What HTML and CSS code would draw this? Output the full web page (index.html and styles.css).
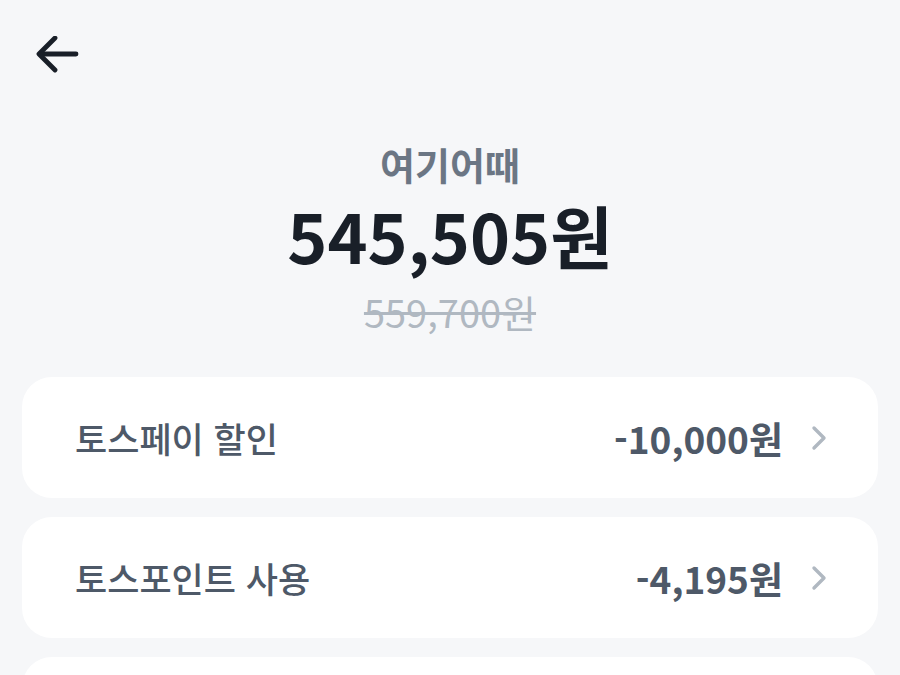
FILE: index.html
```html
<!DOCTYPE html>
<html lang="ko">
  <head>
    <meta charset="UTF-8" />
    <meta name="viewport" content="width=device-width, initial-scale=1.0" />
    <title>결제 금액</title>
    <link rel="stylesheet" href="styles.css">
  </head>
  <body>
    <!-- Top bar with back button -->
    <header class="top-bar">
      <button class="back-btn" type="button" aria-label="뒤로가기">
        <svg width="44" height="40" viewBox="0 0 44 40" fill="none" stroke="#191f28" stroke-width="4.8" stroke-linecap="round" stroke-linejoin="round">
          <path d="M40 18H4" />
          <path d="M19 2L3 18L19 34" />
        </svg>
      </button>
    </header>

    <!-- Payment summary -->
    <section class="summary">
      <p class="merchant">여기어때</p>
      <p class="price">545,505원</p>
      <p class="original">559,700원</p>
    </section>

    <!-- Discount rows -->
    <div class="discount-list">
      <div class="discount-item">
        <span class="discount-label">토스페이 할인</span>
        <span class="discount-value">
          -10,000원
          <svg class="chevron" width="16" height="26" viewBox="0 0 16 26" fill="none" stroke="#b0b8c1" stroke-width="3.4" stroke-linecap="round" stroke-linejoin="round">
            <path d="M3 3L13 13L3 23" />
          </svg>
        </span>
      </div>
      <div class="discount-item">
        <span class="discount-label">토스포인트 사용</span>
        <span class="discount-value">
          -4,195원
          <svg class="chevron" width="16" height="26" viewBox="0 0 16 26" fill="none" stroke="#b0b8c1" stroke-width="3.4" stroke-linecap="round" stroke-linejoin="round">
            <path d="M3 3L13 13L3 23" />
          </svg>
        </span>
      </div>
      <div class="discount-item"></div>
    </div>
  </body>
</html>
```

FILE: styles.css
```css
body {
  margin: 0;
  font-family: "Noto Sans CJK KR", "Noto Sans", sans-serif;
  background-color: #f6f7f9;
  color: #191f28;
  overflow: hidden;
}
.top-bar {
  height: 144px;
  padding: 36px 0 0 36px;
  box-sizing: border-box;
}
.back-btn {
  padding: 0;
  border: none;
  background: none;
  cursor: pointer;
  display: block;
}
.summary {
  text-align: center;
}
.summary p {
  margin: 0;
}
.merchant {
  font-size: 38px;
  line-height: 40px;
  font-weight: 600;
  color: #6b7684;
}
.price {
  margin-top: 2px !important;
  font-size: 68px;
  line-height: 98px;
  font-weight: 700;
  color: #191f28;
}
.original {
  font-size: 38px;
  line-height: 56px;
  color: #b0b8c1;
  text-decoration: line-through;
  text-decoration-thickness: 3px;
}
.discount-list {
  margin: 37px 22px 0;
  display: flex;
  flex-direction: column;
  gap: 19px;
}
.discount-item {
  height: 121px;
  padding: 0 51px 0 53px;
  background-color: #fff;
  border-radius: 30px;
  display: flex;
  align-items: center;
  justify-content: space-between;
}
.discount-label {
  font-size: 35px;
  font-weight: 500;
  color: #4e5968;
}
.discount-value {
  display: flex;
  align-items: center;
  gap: 28px;
  font-size: 37px;
  font-weight: 600;
  color: #4e5968;
}
.chevron {
  display: block;
}
```
